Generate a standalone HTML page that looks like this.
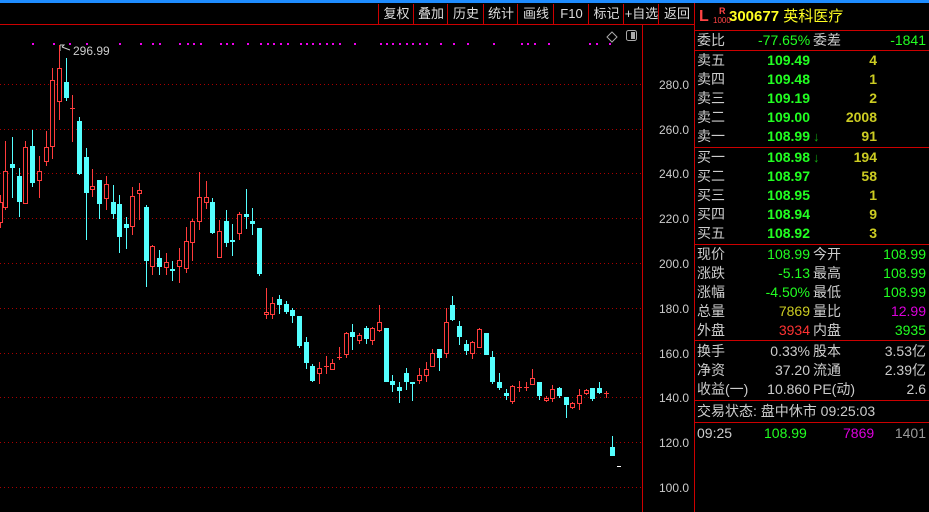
<!DOCTYPE html>
<html><head><meta charset="utf-8"><style>
body{margin:0;width:929px;height:512px;background:#000;overflow:hidden;font-family:"Liberation Sans","Noto Sans CJK SC",sans-serif;position:relative}
.a{position:absolute;white-space:nowrap}
.tb{position:absolute;top:4px;height:20px;line-height:20px;font-size:13px;color:#ddd;text-align:center;border-left:1px solid #c00}
.r{position:absolute;font-size:14px;line-height:19px;height:19px;white-space:nowrap}
.lb{color:#ccc;left:697px}
.l2{color:#ccc;left:813px}
.g{color:#2f2}.y{color:#cc2}.w{color:#ccc}.m{color:#d0d}.rd{color:#f33}
.hl{position:absolute;left:694px;width:235px;height:1px;background:#c00}
</style></head><body>
<div class="a" style="left:0;top:0;width:929px;height:3px;background:#1e8cff"></div>
<div class="a" style="left:0;top:24px;width:694px;height:1px;background:#c00"></div>
<div class="a" style="left:694px;top:3px;width:1px;height:509px;background:#c00"></div>
<div class="tb" style="left:378px;width:35px">复权</div>
<div class="tb" style="left:413px;width:34px">叠加</div>
<div class="tb" style="left:447px;width:36px">历史</div>
<div class="tb" style="left:483px;width:34px">统计</div>
<div class="tb" style="left:517px;width:36px">画线</div>
<div class="tb" style="left:553px;width:35px">F10</div>
<div class="tb" style="left:588px;width:35px">标记</div>
<div class="tb" style="left:623px;width:35px">+自选</div>
<div class="tb" style="left:658px;width:36px">返回</div>
<svg class="a" style="left:0;top:0" width="694" height="512">
<g stroke="#a00" stroke-dasharray="1,3" stroke-width="1">
<line x1="0" x2="642" y1="84.5" y2="84.5"/><line x1="0" x2="642" y1="129.5" y2="129.5"/><line x1="0" x2="642" y1="173.5" y2="173.5"/><line x1="0" x2="642" y1="218.5" y2="218.5"/><line x1="0" x2="642" y1="263.5" y2="263.5"/><line x1="0" x2="642" y1="308.5" y2="308.5"/><line x1="0" x2="642" y1="353.5" y2="353.5"/><line x1="0" x2="642" y1="397.5" y2="397.5"/><line x1="0" x2="642" y1="442.5" y2="442.5"/><line x1="0" x2="642" y1="487.5" y2="487.5"/>
</g>
<line x1="642.5" x2="642.5" y1="25" y2="512" stroke="#c00"/>
<g fill="#ccc" font-size="12" font-family="Liberation Sans" text-anchor="end">
<text x="689" y="89">280.0</text><text x="689" y="134">260.0</text><text x="689" y="178">240.0</text><text x="689" y="223">220.0</text><text x="689" y="268">200.0</text><text x="689" y="313">180.0</text><text x="689" y="358">160.0</text><text x="689" y="402">140.0</text><text x="689" y="447">120.0</text><text x="689" y="492">100.0</text>
</g>
<path d="M612 32 l5 5 -5 5 -5 -5z" fill="none" stroke="#aaa"/>
<rect x="626.5" y="30.5" width="10" height="10" rx="2" fill="none" stroke="#aaa"/><rect x="631" y="32" width="4" height="7" fill="#aaa"/>
<g id="dots" fill="#e0e"></g>
<path d="M60 45v6 M60 45h4 l-2 2 M62 47 l8 3" stroke="#ccc" fill="none"/>
<text x="73" y="55" fill="#ccc" font-size="12" font-family="Liberation Sans">296.99</text>
<rect x="617" y="466" width="4" height="1" fill="#fff"/>
<g id="c"></g>
</svg>
<div class="r" style="left:699px;top:7px;font-size:16px;color:#f44;font-weight:bold">L</div>
<div class="a" style="left:719px;top:7px;font-size:9px;line-height:9px;color:#f44;font-weight:bold">R</div>
<div class="a" style="left:713px;top:16px;font-size:8px;line-height:9px;color:#f44">1000</div>
<div class="r" style="left:729px;top:7px;font-size:15px;color:#ff2;font-weight:bold">300677 <span style="font-weight:normal">英科医疗</span></div>
<div class="hl" style="top:30px"></div>
<div class="r lb" style="top:31px">委比</div><div class="r g" style="left:758px;top:31px">-77.65%</div><div class="r l2" style="top:31px">委差</div><div class="r g" style="right:3px;top:31px">-1841</div>
<div class="hl" style="top:50px"></div>
<div id="ob"></div>
<div class="hl" style="top:147px"></div>
<div class="hl" style="top:244px"></div>
<div class="hl" style="top:340px"></div>
<div class="hl" style="top:400px"></div>
<div class="hl" style="top:422px"></div>
<div id="st"></div>
<div class="r w" style="left:697px;top:402px">交易状态: 盘中休市 09:25:03</div>
<div class="r w" style="left:697px;top:424px">09:25</div><div class="r g" style="left:764px;top:424px">108.99</div><div class="r m" style="left:843px;top:424px">7869</div><div class="r" style="right:3px;top:424px;color:#999">1401</div>
<script>
var d=[[0,195,228,202,223,'r'],[5,141,210,171,208,'r'],[12,137,198,164,168,'c'],[19,168,217,176,202,'c'],[25,141,204,147,204,'r'],[32,130,187,146,183,'c'],[39,156,198,171,181,'r'],[46,131,166,147,162,'r'],[52,68,159,80,147,'r'],[59,45,120,68,102,'r'],[66,58,101,82,98,'c'],[72,95,142,108,108,'r'],[79,117,175,121,174,'c'],[86,148,240,157,193,'c'],[92,169,197,186,190,'r'],[99,180,219,180,204,'c'],[106,176,210,184,199,'r'],[113,185,219,202,214,'c'],[119,195,253,204,237,'c'],[126,217,249,224,228,'c'],[132,187,235,196,227,'r'],[139,183,220,190,194,'r'],[146,205,287,207,261,'c'],[152,245,275,246,267,'r'],[159,250,275,258,267,'c'],[166,253,275,262,268,'r'],[172,261,281,269,271,'c'],[179,248,283,260,267,'r'],[186,227,273,241,269,'r'],[192,219,261,221,243,'r'],[199,172,230,197,222,'r'],[206,181,209,197,203,'r'],[212,198,234,202,233,'c'],[219,220,258,231,258,'r'],[226,210,247,221,243,'c'],[232,224,256,240,242,'c'],[239,212,240,214,234,'r'],[246,189,229,214,217,'c'],[252,208,235,221,224,'c'],[259,228,276,228,274,'c'],
[266,288,319,312,315,'r'],[272,297,319,303,315,'r'],[279,295,314,299,305,'c'],[286,301,314,304,312,'c'],[292,308,323,310,316,'c'],[299,316,348,316,346,'c'],[306,337,369,342,363,'c'],[312,364,382,366,381,'c'],[319,362,384,368,374,'r'],[326,356,374,366,366,'r'],[332,359,370,363,370,'r'],[339,347,360,357,357,'r'],[346,332,358,333,355,'r'],[352,324,350,332,337,'c'],[359,333,344,335,341,'r'],[366,326,344,328,339,'c'],[372,327,345,328,341,'r'],[379,305,332,322,331,'r'],[386,328,382,328,382,'c'],[392,375,392,381,385,'c'],[399,382,403,387,391,'c'],[406,368,390,373,382,'c'],[412,382,401,382,384,'c'],[419,368,384,375,381,'r'],[426,362,382,369,376,'r'],[432,349,367,353,367,'r'],[439,349,371,349,358,'c'],[446,308,358,322,354,'r'],[452,296,321,305,320,'c'],[459,321,345,326,337,'c'],[466,340,355,344,351,'c'],[472,341,359,342,354,'r'],[479,328,348,329,348,'r'],[486,333,355,333,355,'c'],[492,351,384,357,382,'c'],[499,373,390,382,388,'c'],[506,389,400,393,396,'c'],[512,385,404,386,402,'r'],[519,381,392,387,387,'r'],[526,382,391,387,387,'r'],[532,369,385,378,385,'r'],[539,382,400,382,396,'c'],[546,396,402,398,401,'r'],[552,385,402,389,399,'r'],[559,387,398,388,396,'c'],[566,397,418,397,405,'c'],[572,402,409,403,408,'r'],[579,389,410,395,404,'r'],[586,389,395,390,394,'r'],[592,388,401,388,399,'c'],[599,382,394,388,393,'c'],[606,391,398,393,393,'r'],[612,436,456,447,456,'c']];
var s='';d.forEach(function(k){var x=k[0],col=k[5]=='r'?'#ff3c3c':'#54ffff';
s+='<line x1="'+(x+.5)+'" x2="'+(x+.5)+'" y1="'+k[1]+'" y2="'+k[2]+'" stroke="'+col+'"/>';
var h=k[4]-k[3];if(h<1){s+='<rect x="'+(x-2)+'" y="'+k[3]+'" width="5" height="1" fill="'+col+'"/>';}
else if(k[5]=='r'){s+='<rect x="'+(x-1.5)+'" y="'+(k[3]+.5)+'" width="4" height="'+(h-1)+'" fill="#000" stroke="'+col+'"/>';}
else s+='<rect x="'+(x-2)+'" y="'+k[3]+'" width="5" height="'+h+'" fill="'+col+'"/>';});
document.getElementById('c').innerHTML=s;
var dx=[32,53,69,86,119,140,152,159,179,187,193,200,220,226,232,247,260,267,273,280,287,300,306,312,319,326,332,339,354,380,386,392,399,406,412,419,426,440,453,467,493,521,527,534,548,589,596,609];
var t='';dx.forEach(function(x){t+='<rect x="'+x+'" y="43" width="2" height="2"/>'});document.getElementById('dots').innerHTML=t;
var ob=[['卖五','109.49','4'],['卖四','109.48','1'],['卖三','109.19','2'],['卖二','109.00','2008'],['卖一','108.99','91'],['买一','108.98','194'],['买二','108.97','58'],['买三','108.95','1'],['买四','108.94','9'],['买五','108.92','3']];
var o='';ob.forEach(function(k,i){var y=51+i*19+(i>=5?2:0);o+='<div class="r lb" style="top:'+y+'px">'+k[0]+'</div><div class="r g" style="right:119px;top:'+y+'px;font-weight:bold">'+k[1]+'</div><div class="r y" style="right:52px;top:'+y+'px;font-weight:bold">'+k[2]+'</div>';
if(i==4||i==5)o+='<div class="r" style="left:813px;top:'+y+'px;color:#1a1;font-size:13px;font-weight:bold">&#8595;</div>';});
document.getElementById('ob').innerHTML=o;
var st=[['现价','108.99','g','今开','108.99','g'],['涨跌','-5.13','g','最高','108.99','g'],['涨幅','-4.50%','g','最低','108.99','g'],['总量','7869','y','量比','12.99','m'],['外盘','3934','rd','内盘','3935','g'],['换手','0.33%','w','股本','3.53亿','w'],['净资','37.20','w','流通','2.39亿','w'],['收益(一)','10.860','w','PE(动)','2.6','w']];
var q='';st.forEach(function(k,i){var y=245+i*19+(i>=5?2:0);q+='<div class="r lb" style="top:'+y+'px">'+k[0]+'</div><div class="r '+k[2]+'" style="right:119px;top:'+y+'px">'+k[1]+'</div><div class="r l2" style="top:'+y+'px">'+k[3]+'</div><div class="r '+k[5]+'" style="right:3px;top:'+y+'px">'+k[4]+'</div>';});
document.getElementById('st').innerHTML=q;
</script>
</body></html>
